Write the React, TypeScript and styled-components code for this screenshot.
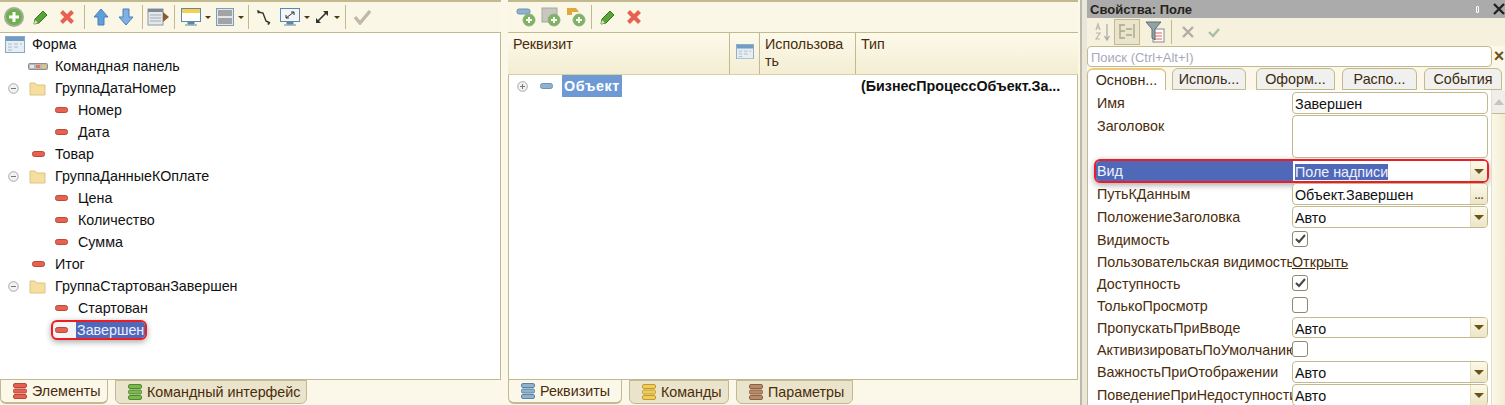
import React from 'react';
import styled, { createGlobalStyle } from 'styled-components';

const GlobalStyle = createGlobalStyle`
  html, body {
    margin: 0;
    padding: 0;
    background: #fbf8ea;
  }
  * {
    box-sizing: border-box;
  }
`;

const TAN = '#c3b98e';

const Page = styled.div`
  display: flex;
  width: 1505px;
  height: 405px;
  overflow: hidden;
  background: #fbf8ea;
  font-family: 'Liberation Sans', Arial, sans-serif;
  font-size: 14.3px;
  color: #111;
`;

const Pane = styled.div<{ $width: number; $gap?: number }>`
  display: flex;
  flex-direction: column;
  flex: none;
  width: ${(p) => p.$width}px;
  margin-right: ${(p) => p.$gap ?? 0}px;
  min-height: 0;
`;

const Splitter = styled.div`
  flex: none;
  width: 9px;
  border-left: 2px solid #fbf8ea;
  background: #e9e6da;
  box-shadow: inset 2px 0 0 #bdb9a8;
`;

const Toolbar = styled.div<{ $pad?: number }>`
  display: flex;
  align-items: center;
  flex: none;
  height: 33px;
  padding-left: ${(p) => p.$pad ?? 0}px;
  border-top: 2px solid ${TAN};
  border-bottom: 1px solid ${TAN};
  background: #faf7e6;
`;

const ToolBtn = styled.span<{ $w: number }>`
  display: inline-flex;
  align-items: center;
  justify-content: center;
  flex: none;
  width: ${(p) => p.$w}px;
  height: 24px;
`;

const Sep = styled.span<{ $w?: number }>`
  flex: none;
  width: ${(p) => p.$w ?? 8}px;
  height: 24px;
  background: linear-gradient(${TAN}, ${TAN}) center / 1px 100% no-repeat;
`;

const Caret = styled.span`
  width: 0;
  height: 0;
  margin-left: 4px;
  border-left: 3px solid transparent;
  border-right: 3px solid transparent;
  border-top: 3px solid #4a3a10;
`;

const TreeArea = styled.div<{ $left?: boolean }>`
  flex: 1;
  min-height: 0;
  background: #fff;
  border-right: 1px solid ${TAN};
  border-bottom: 1px solid ${TAN};
  border-left: ${(p) => (p.$left ? `1px solid ${TAN}` : 'none')};
`;

const TreeRow = styled.div<{ $pad: number }>`
  display: flex;
  align-items: center;
  height: 22px;
  padding-left: ${(p) => p.$pad}px;
  white-space: nowrap;
`;

const Slot = styled.span<{ $w: number; $after: number }>`
  display: inline-flex;
  align-items: center;
  justify-content: center;
  flex: none;
  width: ${(p) => p.$w}px;
  margin-right: ${(p) => p.$after}px;
`;

const Marked = styled.span`
  display: inline-flex;
  align-items: center;
  height: 20px;
  padding-left: 2px;
  border: 2px solid #ee1c25;
  border-radius: 6px;
  box-shadow: 0 2px 6px rgba(0, 0, 0, 0.35);
  overflow: hidden;
  background: #f4f4f4;
`;

const MarkedText = styled.span`
  display: inline-flex;
  align-items: center;
  height: 18px;
  margin-left: 8px;
  padding: 0 1px;
  background: #5068b8;
  color: #eef1ff;
`;

const TabStrip = styled.div`
  display: flex;
  flex: none;
  height: 25px;
  gap: 7px;
`;

const Tab = styled.div<{ $w: number; $active?: boolean }>`
  display: flex;
  align-items: center;
  flex: none;
  width: ${(p) => p.$w}px;
  height: 24px;
  padding-left: 12px;
  gap: 5px;
  color: #4a2c0a;
  background: ${(p) => (p.$active ? '#fbf8ea' : '#e9e4cb')};
  border: 1px solid ${TAN};
  border-top: ${(p) => (p.$active ? 'none' : `1px solid ${TAN}`)};
  border-bottom-width: ${(p) => (p.$active ? '2px' : '1px')};
  border-radius: 0 0 6px 6px;
  white-space: nowrap;
`;

const GridHead = styled.div`
  display: flex;
  flex: none;
  height: 42px;
  border-bottom: 1px solid #d8cfa6;
  background: linear-gradient(#fdfaeb, #f3edd2);
  color: #4a2c0a;
  line-height: 17px;
`;

const HeadCell = styled.div<{ $w: number; $center?: boolean }>`
  flex: none;
  width: ${(p) => p.$w}px;
  padding: ${(p) => (p.$center ? '11px 0 0' : '3px 0 0 5px')};
  border-right: 1px solid ${TAN};
  text-align: ${(p) => (p.$center ? 'center' : 'left')};
  &:last-child {
    border-right: none;
  }
`;

const GridRow = styled.div`
  display: flex;
  align-items: center;
  height: 22px;
  font-weight: bold;
  white-space: nowrap;
`;

const RootCell = styled.div`
  display: flex;
  align-items: center;
  flex: none;
  width: 352px;
  height: 100%;
  padding-left: 8px;
`;

const Selected = styled.span`
  display: inline-flex;
  align-items: center;
  height: 22px;
  padding: 0 2px;
  background: #6d9ad4;
  color: #fff;
  letter-spacing: 0.6px;
`;

const TitleBar = styled.div`
  display: flex;
  align-items: center;
  flex: none;
  height: 18px;
  padding: 0 0 0 3px;
  background: #ababab;
  color: #26221a;
  font-size: 13px;
  font-weight: bold;
`;

const TitleText = styled.span`
  flex: 1;
`;

const PinMark = styled.span`
  width: 3px;
  height: 7px;
  margin-right: 13px;
  border: 1px solid #fff;
  border-radius: 1px;
`;

const PropToolbar = styled.div`
  display: flex;
  align-items: center;
  flex: none;
  height: 28px;
  padding-left: 4px;
  background: #f5f1dd;
`;

const PressedBtn = styled(ToolBtn)`
  height: 26px;
  border: 1px solid ${TAN};
  background: #e9e4cb;
`;

const SearchRow = styled.div`
  display: flex;
  align-items: center;
  flex: none;
  height: 21px;
`;

const SearchBox = styled.div`
  flex: none;
  width: 405px;
  height: 21px;
  padding: 3px 0 0 3px;
  border: 1px solid ${TAN};
  border-radius: 4px;
  background: #fff;
  color: #a8a8bc;
  font-size: 13px;
`;

const SearchClear = styled.span`
  flex: 1;
  text-align: center;
  color: #6b5316;
  font-weight: bold;
  font-size: 18px;
  line-height: 21px;
`;

const PropTabs = styled.div`
  display: flex;
  flex: none;
  height: 23px;
`;

const PropTab = styled.div<{ $w: number; $gap: number; $active?: boolean }>`
  display: flex;
  align-items: center;
  justify-content: center;
  flex: none;
  width: ${(p) => p.$w}px;
  margin-right: ${(p) => p.$gap}px;
  margin-top: 1px;
  color: #3a2a10;
  background: ${(p) => (p.$active ? '#fff' : '#f0f0ee')};
  border: 1px solid ${TAN};
  border-top: ${(p) => (p.$active ? '2px solid #eccb7c' : `1px solid ${TAN}`)};
  border-bottom: ${(p) => (p.$active ? 'none' : `1px solid ${TAN}`)};
  border-radius: 6px 6px 0 0;
`;

const PropBody = styled.div`
  display: flex;
  flex: 1;
  min-height: 0;
  border-left: 1px solid ${TAN};
`;

const PropList = styled.div`
  flex: none;
  width: 403px;
  padding: 2px 3px 0 6px;
  background: #fff;
`;

const PropRow = styled.div<{ $h: number }>`
  display: flex;
  height: ${(p) => p.$h}px;
  color: #4a2c0a;
`;

const MarkedRow = styled.div`
  display: flex;
  height: 24px;
  border: 2px solid #ee1c25;
  border-radius: 6px;
  box-shadow: 0 2px 6px rgba(0, 0, 0, 0.35);
  overflow: hidden;
  margin-right: -1px;
`;

const PropLabel = styled.div<{ $marked?: boolean }>`
  flex: none;
  width: ${(p) => (p.$marked ? 197 : 198)}px;
  padding: ${(p) => (p.$marked ? '2px 0 0 1px' : '3px 0 0 3px')};
  white-space: nowrap;
  overflow: hidden;
  background: ${(p) => (p.$marked ? '#5068b8' : 'transparent')};
  color: ${(p) => (p.$marked ? '#eef1ff' : '#4a2c0a')};
`;

const Field = styled.div`
  display: flex;
  flex: 1;
  min-width: 0;
  margin-bottom: 1px;
  border: 1px solid ${TAN};
  border-radius: 4px;
  background: #fff;
  color: #111;
  overflow: hidden;
`;

const MarkedField = styled(Field)`
  margin-bottom: 0;
  border: none;
  border-radius: 0;
`;

const FieldText = styled.div`
  flex: 1;
  padding: 3px 0 0 2px;
  white-space: nowrap;
`;

const SelectedValue = styled.span`
  background: #4f69b8;
  color: #eef1ff;
`;

const FieldBtn = styled.div`
  display: flex;
  align-items: center;
  justify-content: center;
  flex: none;
  width: 17px;
  border-left: 1px solid #e6dfbf;
  background: linear-gradient(#fcf9ea, #ece5c6);
  color: #6b5316;
  font-weight: bold;
  font-size: 11px;
  line-height: 1;
  padding-top: 3px;
`;

const DownCaret = styled.span`
  width: 0;
  height: 0;
  margin-top: -3px;
  border-left: 5px solid transparent;
  border-right: 5px solid transparent;
  border-top: 5px solid #6b5316;
`;

const CheckBox = styled.div`
  display: flex;
  align-items: center;
  justify-content: center;
  flex: none;
  width: 16px;
  height: 16px;
  margin-top: 2px;
  border: 1px solid #8e8a70;
  border-radius: 3px;
  background: #fff;
`;

const PropLink = styled.span`
  padding-top: 3px;
  color: #4a2c0a;
  text-decoration: underline;
`;

const ScrollTrack = styled.div`
  flex: 1;
  border-left: 1px solid #e5dfc2;
  background: linear-gradient(90deg, #fbf8e9, #f1ebd0);
`;

const ScrollUp = styled.div`
  display: flex;
  align-items: center;
  justify-content: center;
  height: 24px;
  border-bottom: 1px solid ${TAN};
  background: #f1eeea;
`;

const UpArrow = styled.span`
  width: 0;
  height: 0;
  border-left: 5px solid transparent;
  border-right: 5px solid transparent;
  border-bottom: 6px solid #c4c4c0;
`;

const AddIcon = () => (
  <svg width="20" height="20" viewBox="0 0 20 20">
    <circle cx="10" cy="10" r="9" fill="#6fb04e" stroke="#a3ad9a" strokeWidth="2" />
    <path d="M10 5v10M5 10h10" stroke="#fff" strokeWidth="3" />
  </svg>
);

const PencilIcon = () => (
  <svg width="16" height="16" viewBox="0 0 16 16">
    <path d="M1 15l1-5L10 2l4 4-8 8z" fill="#5aa338" stroke="#2f7a1c" />
    <path d="M1 15l1-4 3 3z" fill="#e7e2c0" />
  </svg>
);

const CrossIcon = () => (
  <svg width="16" height="16" viewBox="0 0 16 16">
    <path d="M2.5 2.5l11 11M13.5 2.5l-11 11" stroke="#e8604f" strokeWidth="4" />
  </svg>
);

const ArrowIcon = ({ down }: { down?: boolean }) => (
  <svg width="18" height="18" viewBox="0 0 18 18">
    <path
      d={down ? 'M6 1h6v8h4l-7 8-7-8h4z' : 'M9 1l7 8h-4v8H6V9H2z'}
      fill={down ? '#7fb0e4' : '#5f9fdc'}
      stroke="#4a7fb6"
    />
  </svg>
);

const FormIcon = ({ size = 20 }: { size?: number }) => (
  <svg width={size} height={(size * 17) / 20} viewBox="0 0 20 17">
    <rect x="0.5" y="0.5" width="19" height="16" fill="#e6edf3" stroke="#8aa8c2" />
    <rect x="1" y="1" width="18" height="4" fill="#6f9dc4" />
    <path d="M3 8h4M9 8h4M15 8h2M3 11h4M9 11h4M3 14h4" stroke="#a9bccb" />
  </svg>
);

const ListArrowIcon = () => (
  <svg width="22" height="18" viewBox="0 0 22 18">
    <rect x="1" y="1" width="15" height="16" fill="#e4e8ea" stroke="#8b9aa8" />
    <rect x="1" y="1" width="15" height="3" fill="#7d8a94" />
    <path d="M3 7h11M3 10h11M3 13h11" stroke="#a3adb5" />
    <path d="M16 4l6 5-6 5z" fill="#8d5a36" />
  </svg>
);

const MonitorIcon = ({ yellow }: { yellow?: boolean }) => (
  <svg width="20" height="18" viewBox="0 0 20 18">
    <rect x="0.5" y="0.5" width="19" height="13" fill={yellow ? '#fff' : '#f3f6f8'} stroke="#5f87a8" />
    {yellow && <rect x="1" y="1" width="18" height="4" fill="#f6cf4c" />}
    {!yellow && <path d="M6 10l8-6M6 10h3M6 10V7M14 4h-3M14 4v3" stroke="#333" fill="none" />}
    <path d="M7 14h6v2H7zM4 17h12" stroke="#5f87a8" fill="#5f87a8" />
  </svg>
);

const RowsIcon = () => (
  <svg width="18" height="18" viewBox="0 0 18 18">
    <rect x="0.5" y="0.5" width="17" height="17" fill="#dfe7ed" stroke="#7f9db5" />
    <rect x="2" y="2" width="14" height="6" fill="#a3a3a3" />
    <rect x="2" y="10" width="14" height="6" fill="#a3a3a3" />
  </svg>
);

const WireIcon = () => (
  <svg width="16" height="16" viewBox="0 0 16 16">
    <path d="M2 3l5 1 3 8 4 2" fill="none" stroke="#333" strokeWidth="1.4" />
    <path d="M1 1l3 1-2 3zM11 15l3-2-1 3z" fill="#333" />
  </svg>
);

const ResizeIcon = () => (
  <svg width="16" height="16" viewBox="0 0 16 16">
    <path d="M3 13L13 3" stroke="#333" strokeWidth="1.6" />
    <path d="M9 2h5v5zM2 9v5h5z" fill="#333" />
  </svg>
);

const BigCheck = () => (
  <svg width="18" height="16" viewBox="0 0 18 16">
    <path d="M2 8l5 6L17 2" fill="none" stroke="#c2b8aa" strokeWidth="3.4" />
  </svg>
);

const AddBadge = ({ children }: { children: React.ReactNode }) => (
  <svg width="20" height="20" viewBox="0 0 20 20">
    {children}
    <circle cx="13" cy="13" r="6" fill="#7bb65d" stroke="#9aa98f" />
    <path d="M13 10v6M10 13h6" stroke="#fff" strokeWidth="2" />
  </svg>
);

const SortIcon = () => (
  <svg width="16" height="20" viewBox="0 0 16 20">
    <path d="M12 2v15M9.5 14l2.5 4 2.5-4" fill="none" stroke="#a8a8a8" strokeWidth="1.2" />
    <path d="M1 8l2-6 2 6M2 6h2M1 11h4l-4 6h4" fill="none" stroke="#b7b7b7" strokeWidth="1.2" />
  </svg>
);

const TreeSortIcon = () => (
  <svg width="20" height="20" viewBox="0 0 20 20">
    <path d="M2 3h6M3 3v13h5M3 9h5M9 7h6M9 13h6M17 2v14" fill="none" stroke="#a8a890" strokeWidth="1.4" />
  </svg>
);

const FilterIcon = () => (
  <svg width="20" height="22" viewBox="0 0 20 22">
    <rect x="8" y="8" width="11" height="13" fill="#fff" stroke="#8a8a8a" />
    <path d="M10 12h7M10 15h7M10 18h7" stroke="#e0605a" />
    <path d="M1 1h15l-6 7v11l-3-2V8z" fill="#8fa3a8" stroke="#5f6f74" />
  </svg>
);

const SmallCross = ({ color = '#b5aaa4' }: { color?: string }) => (
  <svg width="14" height="14" viewBox="0 0 14 14">
    <path d="M2 2l10 10M12 2L2 12" stroke={color} strokeWidth="2.4" />
  </svg>
);

const SmallCheck = () => (
  <svg width="14" height="12" viewBox="0 0 14 12">
    <path d="M2 6l4 4 6-7" fill="none" stroke="#a9bdab" strokeWidth="2.4" />
  </svg>
);

const TickMark = () => (
  <svg width="11" height="10" viewBox="0 0 11 10">
    <path d="M1 5l3 3 6-7" fill="none" stroke="#444" strokeWidth="2" />
  </svg>
);

const Toggle = ({ open }: { open?: boolean }) => (
  <svg width="11" height="11" viewBox="0 0 11 11">
    <circle cx="5.5" cy="5.5" r="4.8" fill="#f2f2f2" stroke="#a8a8a8" />
    <path d={open ? 'M3 5.5h5' : 'M3 5.5h5M5.5 3v5'} stroke="#777" />
  </svg>
);

const Folder = () => (
  <svg width="17" height="15" viewBox="0 0 17 15">
    <path d="M1 14V2h5l2 2h8v10z" fill="#f6df9e" stroke="#dcc487" />
  </svg>
);

const CommandPanelIcon = () => (
  <svg width="20" height="7" viewBox="0 0 20 7">
    <rect x="0.5" y="0.5" width="19" height="6" rx="1" fill="#b9b9b9" stroke="#8d8d8d" />
    <rect x="2" y="2" width="4" height="3" fill="#dfe7f0" />
    <rect x="8" y="2" width="4" height="3" fill="#e07b5a" />
    <rect x="14" y="2" width="4" height="3" fill="#e6c86a" />
  </svg>
);

const AttrDash = ({ color = '#e8604f', edge = '#b84a3a' }: { color?: string; edge?: string }) => (
  <svg width="13" height="6" viewBox="0 0 13 6">
    <rect x="0.5" y="0.5" width="12" height="5" rx="2" fill={color} stroke={edge} />
  </svg>
);

const StackIcon = ({ color, edge }: { color: string; edge: string }) => (
  <svg width="14" height="16" viewBox="0 0 14 16">
    {[0, 5.5, 11].map((y) => (
      <rect key={y} x="0.5" y={y + 0.5} width="13" height="4" rx="1.5" fill={color} stroke={edge} />
    ))}
  </svg>
);

type Node = { label: string; pad: number; kind: 'form' | 'panel' | 'group' | 'attr' };

const nodes: Node[] = [
  { label: 'Форма', pad: 5, kind: 'form' },
  { label: 'Командная панель', pad: 28, kind: 'panel' },
  { label: 'ГруппаДатаНомер', pad: 8, kind: 'group' },
  { label: 'Номер', pad: 55, kind: 'attr' },
  { label: 'Дата', pad: 55, kind: 'attr' },
  { label: 'Товар', pad: 32, kind: 'attr' },
  { label: 'ГруппаДанныеКОплате', pad: 8, kind: 'group' },
  { label: 'Цена', pad: 55, kind: 'attr' },
  { label: 'Количество', pad: 55, kind: 'attr' },
  { label: 'Сумма', pad: 55, kind: 'attr' },
  { label: 'Итог', pad: 32, kind: 'attr' },
  { label: 'ГруппаСтартованЗавершен', pad: 8, kind: 'group' },
  { label: 'Стартован', pad: 55, kind: 'attr' },
];

const renderNode = (node: Node) => {
  let icon: React.ReactNode;
  if (node.kind === 'form') {
    icon = (
      <Slot $w={20} $after={7}>
        <FormIcon />
      </Slot>
    );
  } else if (node.kind === 'panel') {
    icon = (
      <Slot $w={20} $after={7}>
        <CommandPanelIcon />
      </Slot>
    );
  } else if (node.kind === 'group') {
    icon = (
      <>
        <Slot $w={11} $after={10}>
          <Toggle open />
        </Slot>
        <Slot $w={17} $after={9}>
          <Folder />
        </Slot>
      </>
    );
  } else {
    icon = (
      <Slot $w={13} $after={10}>
        <AttrDash />
      </Slot>
    );
  }
  return (
    <TreeRow key={node.label} $pad={node.pad}>
      {icon}
      {node.label}
    </TreeRow>
  );
};

type Prop = {
  label: string;
  h: number;
  type: 'text' | 'area' | 'select' | 'path' | 'check' | 'uncheck' | 'link';
  value?: string;
};

const propsBefore: Prop[] = [
  { label: 'Имя', h: 23, type: 'text', value: 'Завершен' },
  { label: 'Заголовок', h: 44, type: 'area' },
];

const propsAfter: Prop[] = [
  { label: 'ПутьКДанным', h: 23, type: 'path', value: 'Объект.Завершен' },
  { label: 'ПоложениеЗаголовка', h: 23, type: 'select', value: 'Авто' },
  { label: 'Видимость', h: 22, type: 'check' },
  { label: 'Пользовательская видимость', h: 22, type: 'link', value: 'Открыть' },
  { label: 'Доступность', h: 22, type: 'check' },
  { label: 'ТолькоПросмотр', h: 22, type: 'uncheck' },
  { label: 'ПропускатьПриВводе', h: 22, type: 'select', value: 'Авто' },
  { label: 'АктивизироватьПоУмолчанию', h: 22, type: 'uncheck' },
  { label: 'ВажностьПриОтображении', h: 23, type: 'select', value: 'Авто' },
  { label: 'ПоведениеПриНедоступности', h: 23, type: 'select', value: 'Авто' },
];

const renderValue = (prop: Prop) => {
  switch (prop.type) {
    case 'check':
      return (
        <CheckBox>
          <TickMark />
        </CheckBox>
      );
    case 'uncheck':
      return <CheckBox />;
    case 'link':
      return <PropLink>{prop.value}</PropLink>;
    default:
      return (
        <Field>
          <FieldText>{prop.value}</FieldText>
          {prop.type === 'select' && (
            <FieldBtn>
              <DownCaret />
            </FieldBtn>
          )}
          {prop.type === 'path' && <FieldBtn>...</FieldBtn>}
        </Field>
      );
  }
};

const renderProp = (prop: Prop) => (
  <PropRow key={prop.label} $h={prop.h}>
    <PropLabel>{prop.label}</PropLabel>
    {renderValue(prop)}
  </PropRow>
);

export default function App() {
  return (
    <Page>
      <GlobalStyle />
      <Pane $width={501} $gap={7}>
        <Toolbar>
          <ToolBtn $w={27}><AddIcon /></ToolBtn>
          <ToolBtn $w={27}><PencilIcon /></ToolBtn>
          <ToolBtn $w={26}><CrossIcon /></ToolBtn>
          <Sep />
          <ToolBtn $w={26}><ArrowIcon /></ToolBtn>
          <ToolBtn $w={24}><ArrowIcon down /></ToolBtn>
          <Sep />
          <ToolBtn $w={24}><ListArrowIcon /></ToolBtn>
          <Sep />
          <ToolBtn $w={36}><MonitorIcon yellow /><Caret /></ToolBtn>
          <ToolBtn $w={31}><RowsIcon /><Caret /></ToolBtn>
          <Sep $w={6} />
          <ToolBtn $w={26}><WireIcon /></ToolBtn>
          <ToolBtn $w={36}><MonitorIcon /><Caret /></ToolBtn>
          <ToolBtn $w={28}><ResizeIcon /><Caret /></ToolBtn>
          <Sep />
          <ToolBtn $w={26}><BigCheck /></ToolBtn>
        </Toolbar>
        <TreeArea>
          {nodes.map(renderNode)}
          <TreeRow $pad={51}>
            <Marked>
              <AttrDash />
              <MarkedText>Завершен</MarkedText>
            </Marked>
          </TreeRow>
        </TreeArea>
        <TabStrip>
          <Tab $w={108} $active>
            <StackIcon color="#e8604f" edge="#b84a3a" />
            Элементы
          </Tab>
          <Tab $w={192}>
            <StackIcon color="#7cb84e" edge="#4f8a30" />
            Командный интерфейс
          </Tab>
        </TabStrip>
      </Pane>

      <Pane $width={570}>
        <Toolbar $pad={5}>
          <ToolBtn $w={25}>
            <AddBadge>
              <rect x="1" y="2" width="13" height="5" rx="2" fill="#8fb2cf" stroke="#6f93b0" />
            </AddBadge>
          </ToolBtn>
          <ToolBtn $w={25}>
            <AddBadge>
              <rect x="1" y="1" width="15" height="14" fill="#c9c6c0" stroke="#a5a5a5" />
            </AddBadge>
          </ToolBtn>
          <ToolBtn $w={25}>
            <AddBadge>
              <path d="M1 1h9l3 4h-7v3H1z" fill="#e2a83a" />
            </AddBadge>
          </ToolBtn>
          <Sep $w={7} />
          <ToolBtn $w={26}><PencilIcon /></ToolBtn>
          <ToolBtn $w={26}><CrossIcon /></ToolBtn>
        </Toolbar>
        <GridHead>
          <HeadCell $w={222}>Реквизит</HeadCell>
          <HeadCell $w={30} $center><FormIcon size={18} /></HeadCell>
          <HeadCell $w={96}>
            Использова
            <br />
            ть
          </HeadCell>
          <HeadCell $w={222}>Тип</HeadCell>
        </GridHead>
        <TreeArea $left>
          <GridRow>
            <RootCell>
              <Slot $w={11} $after={12}><Toggle /></Slot>
              <Slot $w={13} $after={9}>
                <AttrDash color="#8fb2cf" edge="#6f93b0" />
              </Slot>
              <Selected>Объект</Selected>
            </RootCell>
            (БизнесПроцессОбъект.За...
          </GridRow>
        </TreeArea>
        <TabStrip>
          <Tab $w={114} $active>
            <StackIcon color="#8fb2cf" edge="#5f83a0" />
            Реквизиты
          </Tab>
          <Tab $w={100}>
            <StackIcon color="#f0cc5a" edge="#c49a2a" />
            Команды
          </Tab>
          <Tab $w={117}>
            <StackIcon color="#b98a6a" edge="#8a5f44" />
            Параметры
          </Tab>
        </TabStrip>
      </Pane>

      <Splitter />

      <Pane $width={419}>
        <TitleBar>
          <TitleText>Свойства: Поле</TitleText>
          <PinMark />
          <SmallCross color="#222" />
        </TitleBar>
        <PropToolbar>
          <ToolBtn $w={23}><SortIcon /></ToolBtn>
          <PressedBtn $w={26}><TreeSortIcon /></PressedBtn>
          <ToolBtn $w={30}><FilterIcon /></ToolBtn>
          <Sep $w={2} />
          <ToolBtn $w={32}><SmallCross /></ToolBtn>
          <ToolBtn $w={20}><SmallCheck /></ToolBtn>
        </PropToolbar>
        <SearchRow>
          <SearchBox>Поиск (Ctrl+Alt+I)</SearchBox>
          <SearchClear>×</SearchClear>
        </SearchRow>
        <PropTabs>
          <PropTab $w={79} $gap={6} $active>Основн...</PropTab>
          <PropTab $w={74} $gap={10}>Исполь...</PropTab>
          <PropTab $w={79} $gap={7}>Оформ...</PropTab>
          <PropTab $w={75} $gap={7}>Распо...</PropTab>
          <PropTab $w={78} $gap={0}>События</PropTab>
        </PropTabs>
        <PropBody>
          <PropList>
            {propsBefore.map(renderProp)}
            <MarkedRow>
              <PropLabel $marked>Вид</PropLabel>
              <MarkedField>
                <FieldText>
                  <SelectedValue>Поле надписи</SelectedValue>
                </FieldText>
                <FieldBtn>
                  <DownCaret />
                </FieldBtn>
              </MarkedField>
            </MarkedRow>
            {propsAfter.map(renderProp)}
          </PropList>
          <ScrollTrack>
            <ScrollUp>
              <UpArrow />
            </ScrollUp>
          </ScrollTrack>
        </PropBody>
      </Pane>
    </Page>
  );
}
